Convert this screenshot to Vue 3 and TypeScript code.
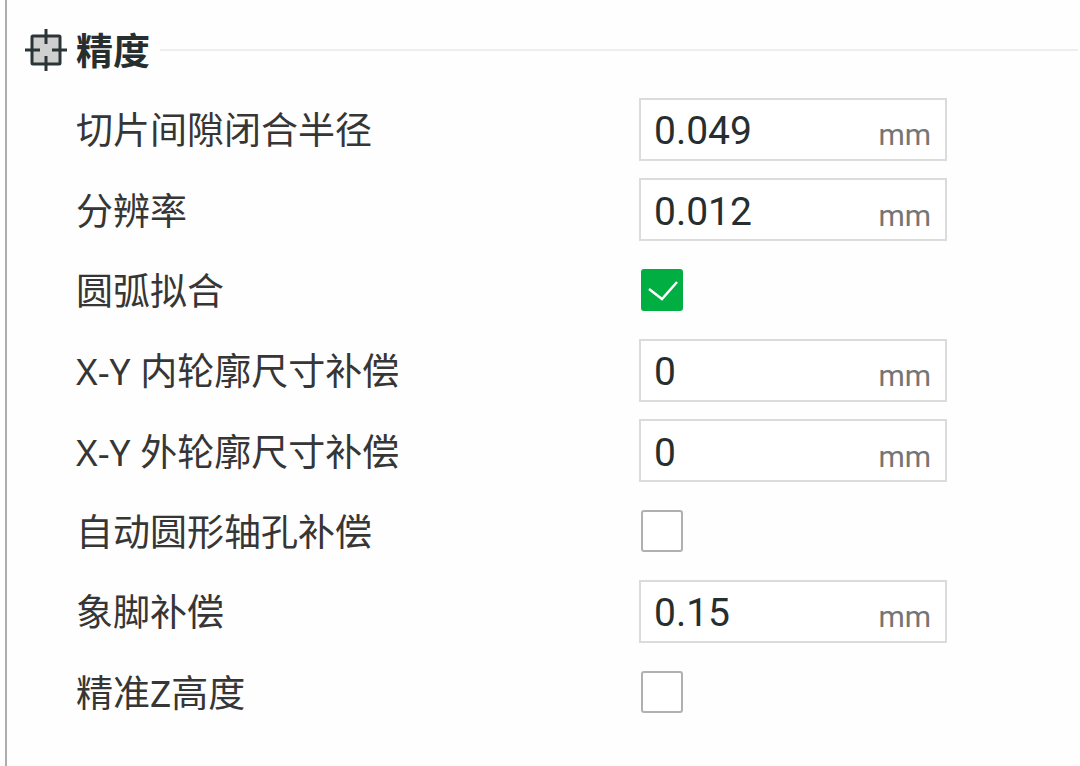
<script setup lang="ts">
import { reactive } from 'vue'

interface Setting {
  id: string
  label: string
  kind: 'number' | 'toggle'
  value: string
  checked: boolean
}

const num = (id: string, label: string, value: string): Setting => ({ id, label, kind: 'number', value, checked: false })
const toggle = (id: string, label: string, checked: boolean): Setting => ({ id, label, kind: 'toggle', value: '', checked })

const settings = reactive<Setting[]>([
  num('gap-radius', '切片间隙闭合半径', '0.049'),
  num('resolution', '分辨率', '0.012'),
  toggle('arc-fitting', '圆弧拟合', true),
  num('xy-hole', 'X-Y 内轮廓尺寸补偿', '0'),
  num('xy-contour', 'X-Y 外轮廓尺寸补偿', '0'),
  toggle('auto-hole', '自动圆形轴孔补偿', false),
  num('elephant-foot', '象脚补偿', '0.15'),
  toggle('precise-z', '精准Z高度', false),
])
</script>

<template>
  <main class="panel">
    <header class="head">
      <svg class="icon" viewBox="0 0 42 42" aria-hidden="true">
        <rect x="7" y="7" width="28" height="28" rx="1" fill="#cfcfcf" stroke="#2b3436" stroke-width="3" />
        <path d="M21 0V15M21 27V42M0 21H15M27 21H42" fill="none" stroke="#2b3436" stroke-width="3" />
      </svg>
      <h1 class="title">精度</h1>
      <span class="rule"></span>
    </header>
    <form class="rows" @submit.prevent>
      <div v-for="s in settings" :key="s.id" class="row">
        <label class="name" :for="s.id">{{ s.label }}</label>
        <div v-if="s.kind === 'number'" class="field">
          <input :id="s.id" v-model="s.value" class="value" type="text" inputmode="decimal" />
          <span class="unit">mm</span>
        </div>
        <span v-else class="tick">
          <input :id="s.id" v-model="s.checked" class="box" type="checkbox" />
          <svg v-if="s.checked" class="mark" viewBox="0 0 42 42" aria-hidden="true">
            <path d="M8 20L21 30L36 13" fill="none" stroke="#fff" stroke-width="2.5" />
          </svg>
        </span>
      </div>
    </form>
  </main>
</template>

<style>
body {
  background: #fefefe;
}
</style>

<style scoped>
.panel {
  box-sizing: border-box;
  min-height: 100vh;
  margin-left: 5px;
  padding-top: 26px;
  border-left: 2px solid #adadad;
  font-family: "Noto Sans", "Noto Sans CJK SC", sans-serif;
  color: #262e30;
}
.head {
  display: flex;
  align-items: center;
  height: 48px;
  padding: 0 2px 0 18px;
}
.icon {
  width: 42px;
  height: 42px;
  margin-right: 9px;
}
.title {
  margin: 0;
  padding-top: 2px;
  font-size: 37px;
  line-height: 48px;
  font-weight: 700;
}
.rule {
  flex: 1;
  height: 2px;
  margin-left: 10px;
  background: #eee;
}
.rows {
  display: grid;
  grid-auto-rows: 1fr;
  min-height: 643px;
  padding: 15px 16px 0 69px;
}
.row {
  display: grid;
  grid-template-columns: 563fr 425fr;
  align-items: center;
}
.name {
  padding-top: 2px;
  font-size: 37px;
  line-height: 48px;
  white-space: nowrap;
  color: #363636;
}
.field {
  box-sizing: border-box;
  display: flex;
  align-items: center;
  width: 308px;
  height: 63px;
  padding: 0 14px 0 13px;
  border: 2px solid #dbdbdb;
  background: #fff;
  font-family: Roboto, "Noto Sans", sans-serif;
}
.value {
  flex: 1;
  min-width: 0;
  padding: 4px 0 0;
  border: 0;
  outline: 0;
  background: none;
  font: inherit;
  font-size: 39px;
  color: inherit;
}
.unit {
  padding-top: 12px;
  font-size: 30px;
  line-height: 36px;
  color: #757575;
}
.tick {
  position: relative;
  width: 42px;
  height: 42px;
  margin-left: 2px;
}
.box {
  appearance: none;
  display: block;
  box-sizing: border-box;
  width: 42px;
  height: 42px;
  margin: 0;
  border: 2px solid #b0b0b0;
  border-radius: 3px;
  background: #fff;
}
.box:checked {
  border-color: #00ae42;
  background: #00ae42;
}
.mark {
  position: absolute;
  inset: 0;
  pointer-events: none;
}
</style>
